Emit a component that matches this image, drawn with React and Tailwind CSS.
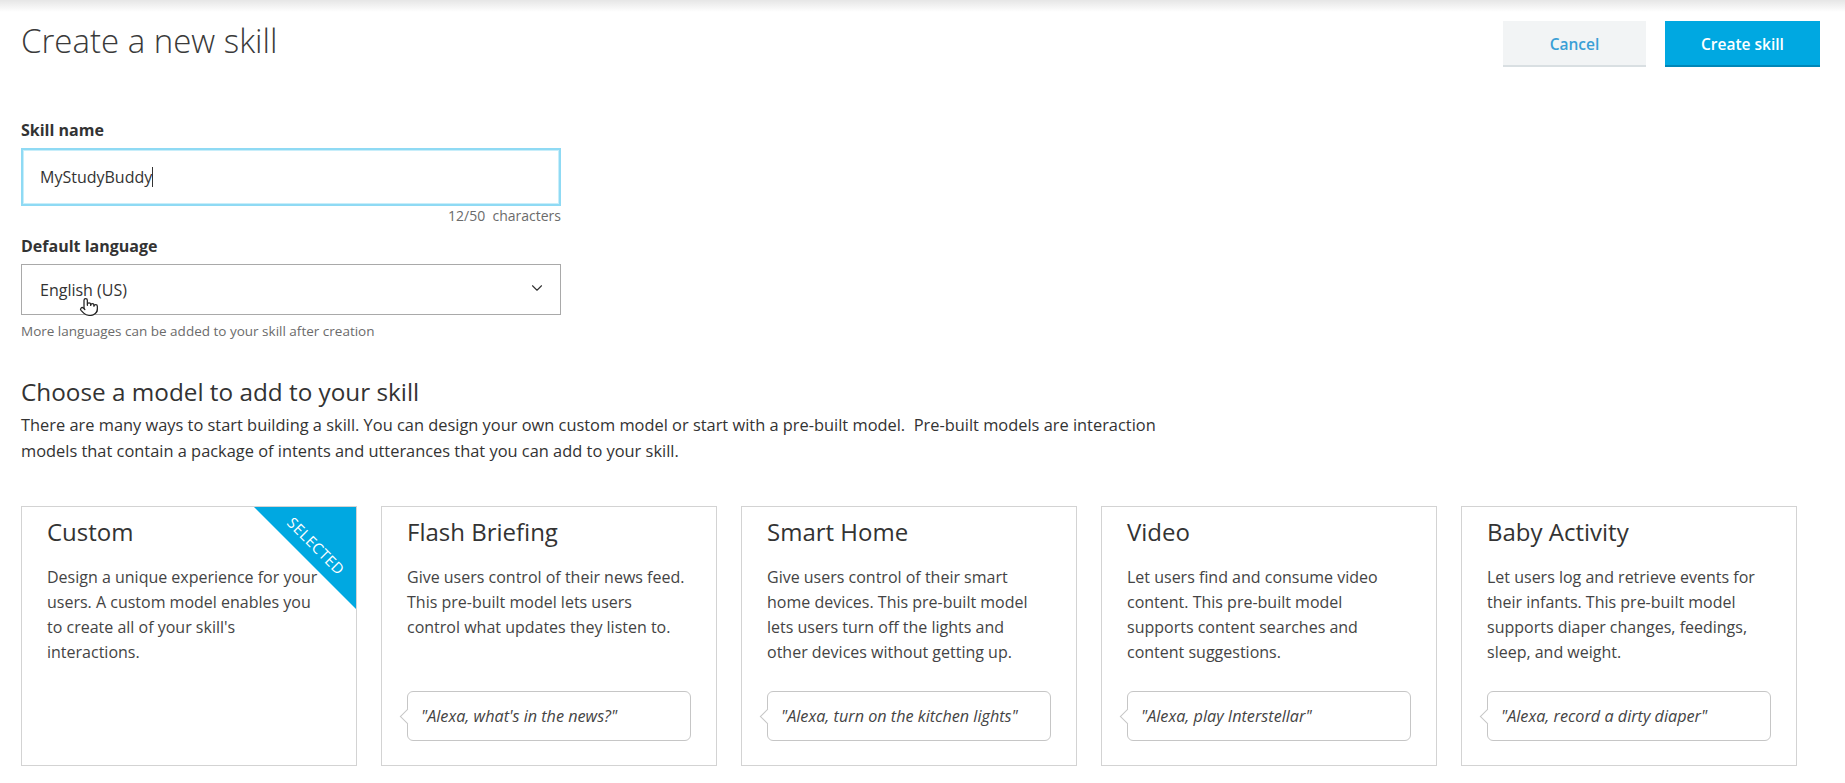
import React, { useState } from 'react'
import { ChevronDown, Pointer } from 'lucide-react'

// model cards shown under "Choose a model"
const models = [
  {
    id: 'custom',
    title: 'Custom',
    desc: "Design a unique experience for your users. A custom model enables you to create all of your skill's interactions.",
    quote: null,
  },
  {
    id: 'flash',
    title: 'Flash Briefing',
    desc: 'Give users control of their news feed. This pre-built model lets users control what updates they listen to.',
    quote: '"Alexa, what\'s in the news?"',
  },
  {
    id: 'smarthome',
    title: 'Smart Home',
    desc: 'Give users control of their smart home devices. This pre-built model lets users turn off the lights and other devices without getting up.',
    quote: '"Alexa, turn on the kitchen lights"',
  },
  {
    id: 'video',
    title: 'Video',
    desc: 'Let users find and consume video content. This pre-built model supports content searches and content suggestions.',
    quote: '"Alexa, play Interstellar"',
  },
  {
    id: 'baby',
    title: 'Baby Activity',
    desc: 'Let users log and retrieve events for their infants. This pre-built model supports diaper changes, feedings, sleep, and weight.',
    quote: '"Alexa, record a dirty diaper"',
  },
]

export default function App() {
  const [name, setName] = useState('MyStudyBuddy')
  const [selected, setSelected] = useState('custom')

  return (
    <div className="min-h-screen bg-white text-[#333] font-['Open_Sans',sans-serif]">
      {/* faint shadow from the console bar above */}
      <div className="h-[12px] bg-linear-to-b from-[#e6e6e6] to-white" />

      {/* Header */}
      <div className="flex items-start justify-between pl-[21px] pr-[25px]">
        <h1 className="mt-[9px] text-[33px] leading-[40px] font-light text-[#3a3a3a]">Create a new skill</h1>
        <div className="mt-[9px] flex gap-[19px]">
          <button className="h-[46px] w-[143px] pt-[4px] bg-[#f2f4f5] border-b-2 border-[#d9dfe2] text-[15.5px] font-semibold text-[#3a9fd6]">
            Cancel
          </button>
          <button className="h-[46px] w-[155px] pt-[4px] bg-[#00a8e1] border-b-2 border-[#0087b8] text-[15.5px] font-semibold text-white">
            Create skill
          </button>
        </div>
      </div>

      <div className="px-[21px]">
        {/* Skill form */}
        <div className="w-[540px] mt-[53px]">
          <label className="block text-[16px] leading-[20px] font-bold text-[#333]">Skill name</label>
          <div className="mt-2 h-[58px] flex items-center border-2 border-[#8fdaf4] shadow-[inset_0_0_0_1px_#c8eefa] px-[17px]">
            <span className="text-[16px] text-[#333]">{name}</span>
            <span className="w-px h-[20px] bg-[#333]" />
          </div>
          <p className="mt-[1px] text-right text-[14px] leading-[18px] text-[#6b6b6b]">
            {name.length}/50&nbsp; characters
          </p>

          <label className="block mt-[11px] text-[16px] leading-[20px] font-bold text-[#333]">Default language</label>
          <div className="relative mt-2 h-[51px] flex items-center justify-between border border-[#a9a9a9] pl-[18px] pr-[14px]">
            <span className="text-[16px] text-[#333]">English (US)</span>
            <ChevronDown size={18} strokeWidth={1.5} className="text-[#333] -mt-[4px]" />
            <Pointer size={20} strokeWidth={1.5} className="absolute left-[57px] top-[32px] text-[#222] fill-white" />
          </div>
          <p className="mt-[7px] text-[13.5px] leading-[18px] text-[#6b6b6b]">
            More languages can be added to your skill after creation
          </p>
        </div>

        {/* Model chooser */}
        <h2 className="mt-[37px] text-[24.3px] leading-[30px] text-[#333]">Choose a model to add to your skill</h2>
        <p className="mt-[5px] max-w-[1170px] text-[16.4px] leading-[26px] text-[#333]">
          There are many ways to start building a skill. You can design your own custom model or start with a pre-built model.&nbsp; Pre-built models are interaction models that contain a package of intents and utterances that you can add to your skill.
        </p>

        <div className="mt-[42px] flex gap-6">
          {models.map(m => (
            <div
              key={m.id}
              onClick={() => setSelected(m.id)}
              className="relative w-[336px] h-[260px] flex flex-col border border-[#d3d3d3] bg-white px-[25px] pt-[10px] pb-[24px] cursor-pointer overflow-hidden"
            >
              {selected === m.id && (
                <div className="absolute top-0 right-0 w-[102px] h-[102px] bg-[#00a8e1] [clip-path:polygon(0_0,100%_0,100%_100%)]">
                  <span className="absolute left-[62px] top-[39px] -translate-x-1/2 -translate-y-1/2 rotate-45 text-[15px] leading-none text-white tracking-[0.5px]">
                    SELECTED
                  </span>
                </div>
              )}
              <h3 className="text-[24px] leading-[30px] text-[#333]">{m.title}</h3>
              <p className="mt-[18px] pr-[5px] text-[16px] leading-[25px] text-[#444]">{m.desc}</p>
              {m.quote && (
                <div className="relative mt-auto h-[50px] flex items-center rounded-[6px] border border-[#c6c6c6] bg-white pl-[13px]">
                  <span className="absolute left-[-6.5px] top-1/2 -mt-[5.5px] w-[11px] h-[11px] bg-white border-l border-b border-[#c6c6c6] rotate-45" />
                  <span className="relative text-[16.2px] italic text-[#444]">{m.quote}</span>
                </div>
              )}
            </div>
          ))}
        </div>
      </div>
    </div>
  )
}
